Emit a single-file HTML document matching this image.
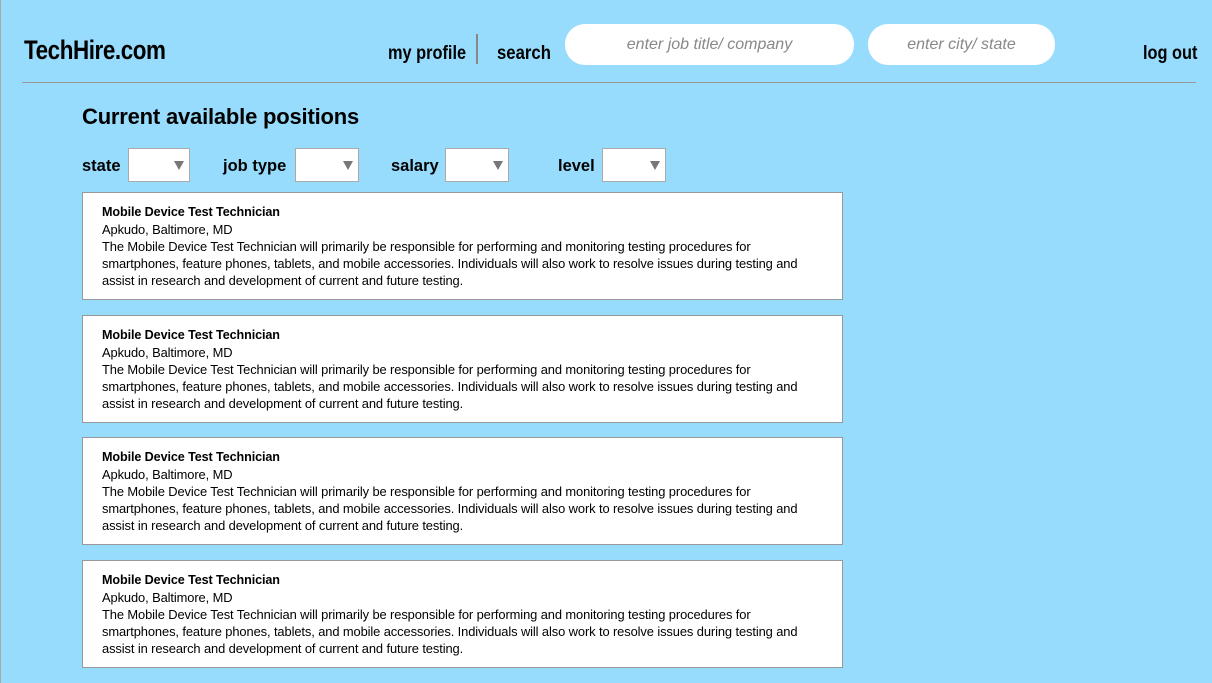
<!DOCTYPE html>
<html><head><style>
body{margin:0;width:1212px;height:683px;background:#97dcfd;font-family:"Liberation Sans",sans-serif;position:relative;overflow:hidden}
.a{position:absolute;white-space:nowrap}
.nar{font-weight:bold;color:#000;transform-origin:0 0}
.pill{position:absolute;background:#fff;border-radius:20px;color:#888;font-style:italic;font-size:16px;text-align:center;line-height:41px;height:41px}
.lbl{position:absolute;font-weight:bold;font-size:16.5px}
.sel{position:absolute;width:62px;height:34px;background:#fff;border:1px solid #aaa;box-sizing:border-box;top:148px}
.sel:after{content:"";position:absolute;right:5px;top:12px;border-left:5px solid transparent;border-right:5px solid transparent;border-top:9px solid #777}
.card{position:absolute;left:82px;width:761px;height:108px;background:#fff;border:1px solid #999;box-sizing:border-box;font-size:12.9px;line-height:17px;padding:11px 0 0 19px;white-space:nowrap;letter-spacing:-0.1px}
.card b{display:block;font-size:12.6px}
</style></head><body>
<div class="a" style="left:0;top:0;width:1px;height:683px;background:#aaa"></div>
<div class="a nar" style="left:24px;top:35px;font-size:27px;transform:scaleX(0.83);letter-spacing:-0.5px">TechHire.com</div>
<div class="a nar" style="left:388px;top:43px;font-size:19px;transform:scaleX(0.86)">my profile</div>
<div class="a" style="left:476px;top:34px;width:2px;height:30px;background:#888"></div>
<div class="a nar" style="left:497px;top:43px;font-size:19px;transform:scaleX(0.88)">search</div>
<div class="pill" style="left:565px;top:24px;width:289px">enter job title/ company</div>
<div class="pill" style="left:868px;top:24px;width:187px">enter city/ state</div>
<div class="a nar" style="left:1143px;top:43px;font-size:19px;transform:scaleX(0.86)">log out</div>
<div class="a" style="left:22px;top:82px;width:1174px;height:1px;background:#999"></div>
<div class="a" style="left:82px;top:104px;font-size:22px;font-weight:bold;letter-spacing:-0.2px">Current available positions</div>
<div class="lbl" style="left:82px;top:157px">state</div><div class="sel" style="left:128px"></div>
<div class="lbl" style="left:223px;top:157px">job type</div><div class="sel" style="left:295px;width:64px"></div>
<div class="lbl" style="left:391px;top:157px">salary</div><div class="sel" style="left:445px;width:64px"></div>
<div class="lbl" style="left:558px;top:157px">level</div><div class="sel" style="left:602px;width:64px"></div>
<div class="card" style="top:192px"><b>Mobile Device Test Technician</b>Apkudo, Baltimore, MD<br>The Mobile Device Test Technician will primarily be responsible for performing and monitoring testing procedures for<br>smartphones, feature phones, tablets, and mobile accessories. Individuals will also work to resolve issues during testing and<br>assist in research and development of current and future testing.</div>
<div class="card" style="top:315px"><b>Mobile Device Test Technician</b>Apkudo, Baltimore, MD<br>The Mobile Device Test Technician will primarily be responsible for performing and monitoring testing procedures for<br>smartphones, feature phones, tablets, and mobile accessories. Individuals will also work to resolve issues during testing and<br>assist in research and development of current and future testing.</div>
<div class="card" style="top:437px"><b>Mobile Device Test Technician</b>Apkudo, Baltimore, MD<br>The Mobile Device Test Technician will primarily be responsible for performing and monitoring testing procedures for<br>smartphones, feature phones, tablets, and mobile accessories. Individuals will also work to resolve issues during testing and<br>assist in research and development of current and future testing.</div>
<div class="card" style="top:560px"><b>Mobile Device Test Technician</b>Apkudo, Baltimore, MD<br>The Mobile Device Test Technician will primarily be responsible for performing and monitoring testing procedures for<br>smartphones, feature phones, tablets, and mobile accessories. Individuals will also work to resolve issues during testing and<br>assist in research and development of current and future testing.</div>
</body></html>
